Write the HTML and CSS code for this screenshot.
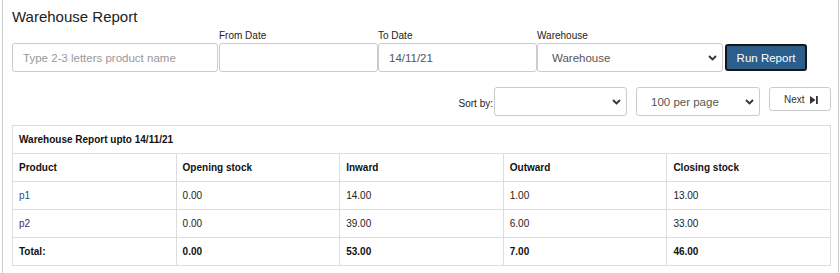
FILE: index.html
```html
<!DOCTYPE html>
<html lang="en">
<head>
<meta charset="UTF-8">
<meta name="viewport" content="width=device-width, initial-scale=1.0">
<title>Warehouse Report</title>

<!-- Styles -->
<link rel="stylesheet" href="styles.css">
</head>
<body>

<div class="panel">
    <h1 class="title">Warehouse Report</h1>

    <!-- Filters -->
    <div class="filters">
        <div class="field field-product">
            <input type="text" class="form-input" placeholder="Type 2-3 letters product name">
        </div>
        <div class="field field-date">
            <label>From Date</label>
            <input type="text" class="form-input">
        </div>
        <div class="field field-date">
            <label>To Date</label>
            <input type="text" class="form-input" value="14/11/21">
        </div>
        <div class="field field-warehouse">
            <label>Warehouse</label>
            <div class="select-wrap">
                <select class="form-select">
                    <option>Warehouse</option>
                </select>
                <svg class="chevron" width="9" height="6" viewBox="0 0 9 6"><path d="M1 1 L4.5 4.5 L8 1" fill="none" stroke="#333" stroke-width="1.8"/></svg>
            </div>
        </div>
        <button class="run-btn">Run Report</button>
    </div>

    <!-- Sort / paging -->
    <div class="toolbar">
        <span class="sort-label">Sort by:</span>
        <div class="select-wrap select-sort">
            <select class="form-select">
                <option></option>
            </select>
            <svg class="chevron" width="9" height="6" viewBox="0 0 9 6"><path d="M1 1 L4.5 4.5 L8 1" fill="none" stroke="#333" stroke-width="1.8"/></svg>
        </div>
        <div class="select-wrap select-page">
            <select class="form-select">
                <option>100 per page</option>
            </select>
            <svg class="chevron" width="9" height="6" viewBox="0 0 9 6"><path d="M1 1 L4.5 4.5 L8 1" fill="none" stroke="#333" stroke-width="1.8"/></svg>
        </div>
        <button class="next-btn">Next
            <svg width="8" height="8" viewBox="0 0 8 8"><path d="M0 0 L5.5 4 L0 8 Z" fill="#333"/><rect x="6" y="0" width="1.8" height="8" fill="#333"/></svg>
        </button>
    </div>

    <!-- Report table -->
    <table class="report">
        <thead>
            <tr><th colspan="5" class="caption">Warehouse Report upto 14/11/21</th></tr>
            <tr>
                <th>Product</th>
                <th>Opening stock</th>
                <th>Inward</th>
                <th>Outward</th>
                <th>Closing stock</th>
            </tr>
        </thead>
        <tbody>
            <tr>
                <td><a href="#" class="prod-link">p1</a></td>
                <td>0.00</td>
                <td>14.00</td>
                <td>1.00</td>
                <td>13.00</td>
            </tr>
            <tr>
                <td><a href="#" class="prod-link visited">p2</a></td>
                <td>0.00</td>
                <td>39.00</td>
                <td>6.00</td>
                <td>33.00</td>
            </tr>
            <tr class="total-row">
                <td>Total:</td>
                <td>0.00</td>
                <td>53.00</td>
                <td>7.00</td>
                <td>46.00</td>
            </tr>
        </tbody>
    </table>
</div>

</body>
</html>
```

FILE: styles.css
```css
body {
    font-family: "Liberation Sans", Arial, sans-serif;
    margin: 0;
    padding: 0;
    background-color: #fff;
    color: #333;
}

.panel {
    margin: 0 1px 0 2px;
    min-height: 100vh;
    box-sizing: border-box;
    border-left: 1px solid #ccc;
    border-right: 1px solid #ccc;
    padding: 8px 7px 0 9px;
}

.title {
    margin: 0;
    font-size: 15px;
    font-weight: normal;
    line-height: 17px;
    color: #222;
}

/* Filters */
.filters {
    display: flex;
    align-items: flex-end;
    margin-top: 5px;
}

.field {
    display: flex;
    flex-direction: column;
}

.field label {
    font-size: 10px;
    line-height: 12px;
    color: #222;
    margin-bottom: 1px;
}

.field-product {
    width: 206px;
    margin-right: 1px;
}

.field-date {
    width: 159px;
}

.field-warehouse {
    width: 186px;
}

.form-input,
.form-select {
    box-sizing: border-box;
    width: 100%;
    height: 29px;
    padding: 0 10px;
    font-family: inherit;
    font-size: 11.5px;
    color: #555;
    background-color: #fff;
    border: 1px solid #ccc;
    border-radius: 3px;
    outline: none;
}

.form-input::placeholder {
    color: #999;
}

.form-select {
    appearance: none;
    -webkit-appearance: none;
    padding-left: 14px;
}

.select-wrap {
    position: relative;
}

.chevron {
    position: absolute;
    right: 6px;
    top: 12px;
    pointer-events: none;
}

.run-btn {
    box-sizing: border-box;
    height: 27px;
    width: 82px;
    margin: 0 0 1px 2px;
    padding: 0;
    font-family: inherit;
    font-size: 11.5px;
    color: #fff;
    background-color: #2b5e8d;
    border: 2px solid #161616;
    border-radius: 3px;
    cursor: pointer;
}

/* Sort / paging */
.toolbar {
    display: flex;
    justify-content: flex-end;
    align-items: flex-start;
    margin-top: 15px;
}

.sort-label {
    font-size: 10px;
    color: #222;
    margin: 11px 1px 0 0;
}

.select-sort {
    width: 133px;
}

.select-page {
    width: 124px;
    margin-left: 9px;
}

.next-btn {
    box-sizing: border-box;
    width: 62px;
    height: 24px;
    margin-left: 9px;
    padding: 0 0 0 14px;
    text-align: left;
    font-family: inherit;
    font-size: 10px;
    color: #333;
    background-color: #fff;
    border: 1px solid #ccc;
    border-radius: 3px;
    cursor: pointer;
}

.next-btn svg {
    margin-left: 3px;
    vertical-align: -1px;
}

/* Report table */
.report {
    width: 819px;
    margin-top: 9px;
    border-collapse: collapse;
    table-layout: fixed;
    font-size: 10px;
}

.report th,
.report td {
    border: 1px solid #ddd;
    padding: 8px 6px;
    line-height: 11px;
    text-align: left;
}

.report th {
    font-weight: bold;
    color: #111;
}

.report td {
    color: #222;
}

.report .caption {
    font-weight: bold;
}

.prod-link {
    color: #1f4f8c;
    text-decoration: none;
}

.prod-link.visited {
    color: #4b2470;
}

.total-row td {
    font-weight: bold;
    color: #111;
}
```
